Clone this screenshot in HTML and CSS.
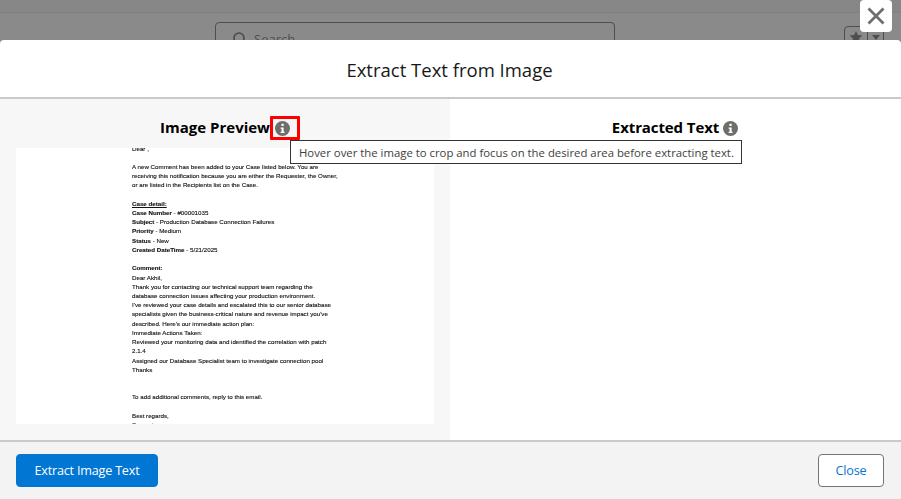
FILE: index.html
```html
<!DOCTYPE html>
<html lang="en">
<head>
<meta charset="utf-8">
<title>Extract Text from Image</title>
<link rel="stylesheet" href="styles.css">
</head>
<body>
<div class="backdrop">
  <div class="topstrip"></div>
  <div class="searchbox">
    <svg class="searchicon" viewBox="0 0 16 16" width="16" height="16"><circle cx="7" cy="7" r="5" fill="none" stroke="#4a4a4a" stroke-width="1.6"/><path d="M10.5 10.5 15 15" stroke="#4a4a4a" stroke-width="1.6"/></svg>
    <span>Search...</span>
  </div>
  <div class="favs">
    <span class="fav"><svg viewBox="0 0 16 16" width="14" height="14"><path d="M8 1l2.2 4.7 5 .6-3.7 3.4 1 5L8 12.2 3.500 14.700l1-5L.8 6.300l5-.6z" fill="#4f4f4f"/></svg></span>
    <span class="fav narrow"><svg viewBox="0 0 10 10" width="10" height="10"><path d="M1 3h8L5 8z" fill="#4f4f4f"/></svg></span>
  </div>
</div>

<button class="xbtn" type="button" aria-label="Close">
  <svg viewBox="0 0 20 20" width="20" height="20"><path d="M2.500 2.500 17.500 17.500M17.500 2.500 2.500 17.500" stroke="#706e6b" stroke-width="2.800" stroke-linecap="butt"/></svg>
</button>

<section class="modal">
  <header class="modal-head"><h2>Extract Text from Image</h2></header>
  <div class="modal-body">
    <div class="pane pane-left">
      <h3 class="pane-title">Image Preview
        <span class="iconwrap">
          <svg class="info" viewBox="0 0 16 16" width="15" height="15"><circle cx="8" cy="8" r="8" fill="#706e6b"/><rect x="6.900" y="3" width="2.400" height="2.400" rx=".5" fill="#fff"/><path d="M6 6.800h3.200v4.600h1v1.400H6v-1.400h1V8.200H6z" fill="#fff"/></svg>
          <span class="redbox"></span>
        </span>
      </h3>
      <div class="doc">
        <div class="doc-text">
<p>Dear ,</p>
<p class="gap">A new Comment has been added to your Case listed below. You are</p>
<p>receiving this notification because you are either the Requester, the Owner,</p>
<p>or are listed in the Recipients list on the Case.</p>
<p class="gap"><b class="u">Case detail:</b></p>
<p><b>Case Number</b> - #00001035</p>
<p><b>Subject</b> - Production Database Connection Failures</p>
<p><b>Priority</b> - Medium</p>
<p><b>Status</b> - New</p>
<p><b>Created DateTime</b> - 5/21/2025</p>
<p class="gap"><b>Comment:</b></p>
<p>Dear Akhil,</p>
<p>Thank you for contacting our technical support team regarding the</p>
<p>database connection issues affecting your production environment.</p>
<p>I've reviewed your case details and escalated this to our senior database</p>
<p>specialists given the business-critical nature and revenue impact you've</p>
<p>described. Here's our immediate action plan:</p>
<p>Immediate Actions Taken:</p>
<p>Reviewed your monitoring data and identified the correlation with patch</p>
<p>2.1.4</p>
<p>Assigned our Database Specialist team to investigate connection pool</p>
<p>Thanks</p>
<p class="gap2">To add additional comments, reply to this email.</p>
<p class="gap">Best regards,</p>
<p>Support</p>
        </div>
      </div>
      <div class="tooltip">Hover over the image to crop and focus on the desired area before extracting text.</div>
    </div>
    <div class="pane pane-right">
      <h3 class="pane-title">Extracted Text
        <span class="iconwrap">
          <svg class="info" viewBox="0 0 16 16" width="15" height="15"><circle cx="8" cy="8" r="8" fill="#706e6b"/><rect x="6.900" y="3" width="2.400" height="2.400" rx=".5" fill="#fff"/><path d="M6 6.800h3.200v4.600h1v1.400H6v-1.400h1V8.200H6z" fill="#fff"/></svg>
        </span>
      </h3>
    </div>
  </div>
  <footer class="modal-foot">
    <button class="btn btn-brand" type="button">Extract Image Text</button>
    <button class="btn btn-neutral" type="button">Close</button>
  </footer>
</section>
</body>
</html>
```

FILE: styles.css
```css
* { box-sizing: border-box; }
html, body { margin: 0; height: 100%; }
body {
  width: 901px;
  height: 499px;
  overflow: hidden;
  position: relative;
  background: #8a8a8a;
  font-family: "Open Sans", "Noto Sans", sans-serif;
  color: #000;
}
.backdrop { height: 40px; position: relative; overflow: hidden; }
.topstrip { height: 13px; background: #878787; border-bottom: 1px solid #808080; }
.searchbox {
  position: absolute;
  left: 215px;
  top: 22px;
  width: 400px;
  height: 34px;
  border: 1px solid #4e4e4e;
  border-radius: 4px;
  display: flex;
  align-items: flex-start;
  gap: 6px;
  padding: 8px 0 0 16px;
  font-size: 13px;
  line-height: 16px;
  color: #4f4f4f;
}
.favs { position: absolute; left: 844px; top: 26px; display: flex; }
.fav {
  width: 24px;
  height: 24px;
  border: 1px solid #4e4e4e;
  border-radius: 4px 0 0 4px;
  display: flex;
  align-items: flex-start;
  justify-content: center;
  padding-top: 3px;
}
.fav.narrow { width: 17px; margin-left: -1px; border-radius: 0 4px 4px 0; padding-top: 5px; }
.xbtn {
  position: absolute;
  left: 860px;
  top: 0;
  width: 32px;
  height: 32px;
  border: 0;
  border-radius: 4px;
  background: #fff;
  padding: 0;
  display: flex;
  align-items: center;
  justify-content: center;
  z-index: 3;
}
.xbtn svg { display: block; }
.modal {
  position: absolute;
  left: 0;
  top: 40px;
  width: 901px;
  height: 459px;
  background: #fff;
  border-radius: 4px 4px 0 0;
  display: flex;
  flex-direction: column;
}
.modal-head {
  height: 59px;
  border-bottom: 2px solid #c9c9c9;
  display: flex;
  align-items: center;
  justify-content: center;
  padding-top: 3px;
  padding-right: 2px;
}
.modal-head h2 { margin: 0; font-size: 18.500px; font-weight: 400; line-height: 24px; color: #181818; }
.modal-body { display: flex; height: 341px; }
.pane { position: relative; padding: 18px 17px 0 16px; }
.pane-left { background: #f7f7f7; width: 450px; }
.pane-right { background: #fff; width: 451px; }
.pane-title {
  margin: 0;
  height: 21px;
  font-size: 15px;
  line-height: 21px;
  font-weight: 700;
  display: flex;
  justify-content: center;
  align-items: center;
  gap: 5px;
  color: #000;
}
.pane-left .pane-title { padding-left: 1px; }
.pane-right .pane-title { letter-spacing: -.1px; gap: 4px; }
.iconwrap { position: relative; display: block; width: 15px; height: 15px; margin-top: 1px; }
.info { display: block; }
.redbox {
  position: absolute;
  left: -5px;
  top: -5px;
  width: 30px;
  height: 24px;
  border: 3px solid #f00;
  border-radius: 1px;
}
.doc {
  margin-top: 10px;
  width: 418px;
  height: 276px;
  background: #fff;
  overflow: hidden;
}
.doc-text {
  margin: -4.500px 0 0 116px;
  font-family: "Liberation Sans", Arial, sans-serif;
  font-size: 6.200px;
  line-height: 9.220px;
  color: #111;
  white-space: nowrap;
  -webkit-text-stroke: .12px #111;
  filter: blur(.3px);
}
.doc-text p { margin: 0; }
.doc-text .gap { margin-top: 9.220px; }
.doc-text .gap2 { margin-top: 18.440px; }
.doc-text .u { text-decoration: underline; }
.tooltip {
  position: absolute;
  left: 290px;
  top: 41px;
  width: 452px;
  height: 24px;
  background: #fff;
  border: 1px solid #333;
  font-size: 11.350px;
  line-height: 23px;
  padding-left: 8px;
  color: #3e3e3c;
  white-space: nowrap;
  z-index: 2;
}
.modal-foot {
  flex: 1;
  border-top: 2px solid #c9c9c9;
  background: #f3f3f3;
  display: flex;
  justify-content: space-between;
  align-items: flex-start;
  padding: 12px 17px 0 16px;
}
.btn {
  height: 33px;
  border-radius: 4px;
  font-family: inherit;
  font-size: 12.600px;
  letter-spacing: -.2px;
  line-height: 20px;
  padding: 0;
}
.btn-brand { width: 142px; background: #0176d3; border: 1px solid #0176d3; color: #fff; }
.btn-neutral { width: 66px; background: #fff; border: 1px solid #747474; color: #0176d3; }
```
